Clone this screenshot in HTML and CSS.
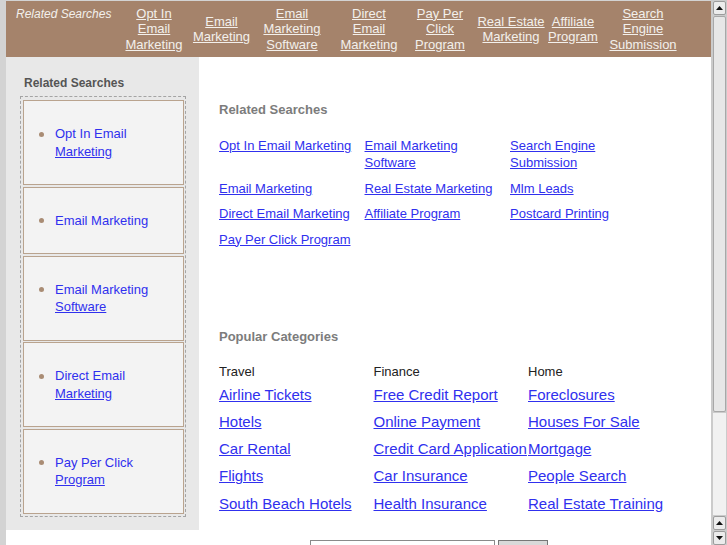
FILE: index.html
```html
<!DOCTYPE html>
<html>
<head>
<meta charset="utf-8">
<title>Related Searches</title>
<link rel="stylesheet" href="styles.css">
</head>
<body>
<div class="window">
  <div class="page">
    <header class="topbar">
      <div class="tb-label">Related Searches</div>
      <div class="tb-cell c1"><a class="tb-link" href="#">Opt In<br>Email<br>Marketing</a></div>
      <div class="tb-cell c2"><a class="tb-link" href="#">Email<br>Marketing</a></div>
      <div class="tb-cell c3"><a class="tb-link" href="#">Email<br>Marketing<br>Software</a></div>
      <div class="tb-cell c4"><a class="tb-link" href="#">Direct<br>Email<br>Marketing</a></div>
      <div class="tb-cell c5"><a class="tb-link" href="#">Pay Per<br>Click<br>Program</a></div>
      <div class="tb-cell c6"><a class="tb-link" href="#">Real Estate<br>Marketing</a></div>
      <div class="tb-cell c7"><a class="tb-link" href="#">Affiliate<br>Program</a></div>
      <div class="tb-cell c8"><a class="tb-link" href="#">Search<br>Engine<br>Submission</a></div>
    </header>
    <div class="body-row">
      <aside class="sidebar">
        <h3 class="side-title">Related Searches</h3>
        <div class="side-box">
          <div class="side-item"><span class="dot"></span><a class="side-link" href="#">Opt In Email <span class="u">Marketing</span></a></div>
          <div class="side-item"><span class="dot"></span><a class="side-link" href="#">Email Marketing</a></div>
          <div class="side-item"><span class="dot"></span><a class="side-link" href="#">Email Marketing <span class="u">Software</span></a></div>
          <div class="side-item"><span class="dot"></span><a class="side-link" href="#">Direct Email <span class="u">Marketing</span></a></div>
          <div class="side-item"><span class="dot"></span><a class="side-link" href="#">Pay Per Click <span class="u">Program</span></a></div>
        </div>
      </aside>
      <main class="content">
        <h2 class="sec-title">Related Searches</h2>
        <div class="rel-grid">
          <div class="rel-cell"><a class="rel-link" href="#">Opt In Email Marketing</a></div>
          <div class="rel-cell"><a class="rel-link" href="#">Email Marketing Software</a></div>
          <div class="rel-cell"><a class="rel-link" href="#">Search Engine Submission</a></div>
          <div class="rel-cell"><a class="rel-link" href="#">Email Marketing</a></div>
          <div class="rel-cell"><a class="rel-link" href="#">Real Estate Marketing</a></div>
          <div class="rel-cell"><a class="rel-link" href="#">Mlm Leads</a></div>
          <div class="rel-cell"><a class="rel-link" href="#">Direct Email Marketing</a></div>
          <div class="rel-cell"><a class="rel-link" href="#">Affiliate Program</a></div>
          <div class="rel-cell"><a class="rel-link" href="#">Postcard Printing</a></div>
          <div class="rel-cell"><a class="rel-link" href="#">Pay Per Click Program</a></div>
        </div>
        <h2 class="sec-title pop-title">Popular Categories</h2>
        <div class="cat-grid">
          <div class="cat-col">
            <div class="cat-name">Travel</div>
            <a class="cat-link" href="#">Airline Tickets</a>
            <a class="cat-link" href="#">Hotels</a>
            <a class="cat-link" href="#">Car Rental</a>
            <a class="cat-link" href="#">Flights</a>
            <a class="cat-link" href="#">South Beach Hotels</a>
          </div>
          <div class="cat-col">
            <div class="cat-name">Finance</div>
            <a class="cat-link" href="#">Free Credit Report</a>
            <a class="cat-link" href="#">Online Payment</a>
            <a class="cat-link" href="#">Credit Card Application</a>
            <a class="cat-link" href="#">Car Insurance</a>
            <a class="cat-link" href="#">Health Insurance</a>
          </div>
          <div class="cat-col">
            <div class="cat-name">Home</div>
            <a class="cat-link" href="#">Foreclosures</a>
            <a class="cat-link" href="#">Houses For Sale</a>
            <a class="cat-link" href="#">Mortgage</a>
            <a class="cat-link" href="#">People Search</a>
            <a class="cat-link" href="#">Real Estate Training</a>
          </div>
        </div>
      </main>
    </div>
    <div class="footer">
      <input class="search-input" type="text" aria-label="Search">
      <button class="search-btn" type="button" aria-label="Search"></button>
    </div>
  </div>
  <div class="scrollbar">
    <div class="sb-btn"><svg width="7" height="4" viewBox="0 0 7 4"><polygon points="0,4 7,4 3.5,0" fill="#111"/></svg></div>
    <div class="sb-thumb"></div>
    <div class="sb-track"></div>
    <div class="sb-btn"><svg width="7" height="4" viewBox="0 0 7 4"><polygon points="0,4 7,4 3.5,0" fill="#111"/></svg></div>
    <div class="sb-btn"><svg width="7" height="4" viewBox="0 0 7 4"><polygon points="0,0 7,0 3.5,4" fill="#111"/></svg></div>
  </div>
</div>
</body>
</html>
```

FILE: styles.css
```css
* { box-sizing: border-box; }
html, body { margin: 0; height: 100%; }
body {
  background: #d3d3d3;
  font-family: "Liberation Sans", Arial, sans-serif;
  overflow: hidden;
}
.window { display: flex; height: 545px; }
.page {
  flex: 1;
  min-width: 0;
  padding: 1px 0 0 6px;
  display: flex;
  flex-direction: column;
}

/* top bar */
.topbar {
  height: 56px;
  flex: none;
  background: #a5836b;
  display: flex;
  align-items: center;
  padding-left: 10px;
}
.tb-label {
  width: 102px;
  align-self: flex-start;
  padding-top: 6px;
  font-style: italic;
  font-size: 12px;
  line-height: 15px;
  color: #f3f0ec;
}
.tb-cell { display: flex; justify-content: center; font-size: 13px; line-height: 15.5px; }
.c1 { width: 72px; }
.c2 { width: 63px; }
.c3 { width: 78px; }
.c4 { width: 76px; }
.c5 { width: 66px; }
.c6 { width: 76px; }
.c7 { width: 48px; }
.c8 { width: 92px; }
.tb-link {
  color: #f3f0ec;
  font-size: 13px;
  line-height: 15.5px;
  text-align: center;
  white-space: nowrap;
  text-decoration: underline;
}

/* body */
.body-row { display: flex; background: #fff; flex: none; }
.sidebar {
  width: 193px;
  flex: none;
  background: #e8e8e8;
  padding: 0 13px 13.5px 14px;
  align-self: flex-start;
}
.side-title {
  margin: 19px 0 6px 4px;
  font-size: 12px;
  line-height: 14px;
  font-weight: bold;
  color: #555;
}
.side-box {
  width: 166px;
  border: 1px dashed #a4a4a4;
  padding: 3px 1px 2px 2px;
  display: flex;
  flex-direction: column;
  gap: 1.5px;
}
.side-item {
  border: 1px solid #b9a38e;
  background: #f3f3f3;
  padding: 24px 8px 24px 15px;
  display: flex;
  align-items: flex-start;
  font-size: 13px;
  line-height: 17.5px;
}
.dot {
  flex: none;
  width: 5px;
  height: 5px;
  border-radius: 50%;
  background: #a98c74;
  margin: 6.5px 11px 0 0;
}
.side-link {
  color: #3030ee;
  font-size: 13px;
  line-height: 17.5px;
  text-decoration: none;
}
.u { text-decoration: underline; }

.content {
  flex: 1;
  background: #fff;
  padding: 45px 0 0 20px;
}
.sec-title {
  margin: 0;
  font-size: 13px;
  line-height: 16px;
  font-weight: bold;
  color: #7c7c7c;
}
.rel-grid {
  display: grid;
  grid-template-columns: 145.5px 145.5px 145.5px;
  row-gap: 8.5px;
  margin-top: 19px;
}
.rel-cell { padding-right: 8px; font-size: 13px; line-height: 17px; }
.rel-link {
  color: #3030ee;
  font-size: 13px;
  line-height: 17px;
  text-decoration: underline;
}
.pop-title { margin-top: 81px; }
.cat-grid {
  display: grid;
  grid-template-columns: 154.5px 154.5px 154.5px;
  margin-top: 19px;
}
.cat-col { display: flex; flex-direction: column; align-items: flex-start; }
.cat-name {
  font-size: 13px;
  line-height: 16px;
  color: #222;
  margin-bottom: 1px;
}
.cat-link {
  color: #3030ee;
  font-size: 15px;
  line-height: 27.25px;
  white-space: nowrap;
  text-decoration: underline;
}

.footer {
  flex: 1;
  background: #fff;
  padding: 10px 0 0 304px;
  display: flex;
  gap: 3px;
  align-items: flex-start;
}
.search-input {
  width: 185px;
  height: 22px;
  border: 1px solid #8a8a8a;
  background: #fff;
  margin: 0;
}
.search-btn {
  width: 50px;
  height: 22px;
  border: 1px solid #777;
  background: #d9d9d9;
  margin: 0;
}

/* scrollbar */
.scrollbar {
  width: 16px;
  flex: none;
  background: #cbcbcb;
  padding: 1px 1px 0 2px;
  display: flex;
  flex-direction: column;
  gap: 1px;
}
.sb-btn {
  height: 14px;
  flex: none;
  background: #ececec;
  border: 1px solid #9c9c9c;
  border-radius: 2px;
  display: flex;
  align-items: center;
  justify-content: center;
}
.sb-thumb {
  height: 396px;
  flex: none;
  background: #e7e7e7;
  border: 1px solid #a8a8a8;
  border-radius: 2px;
}
.sb-track { flex: 1; background: #f1f1f1; }
```
